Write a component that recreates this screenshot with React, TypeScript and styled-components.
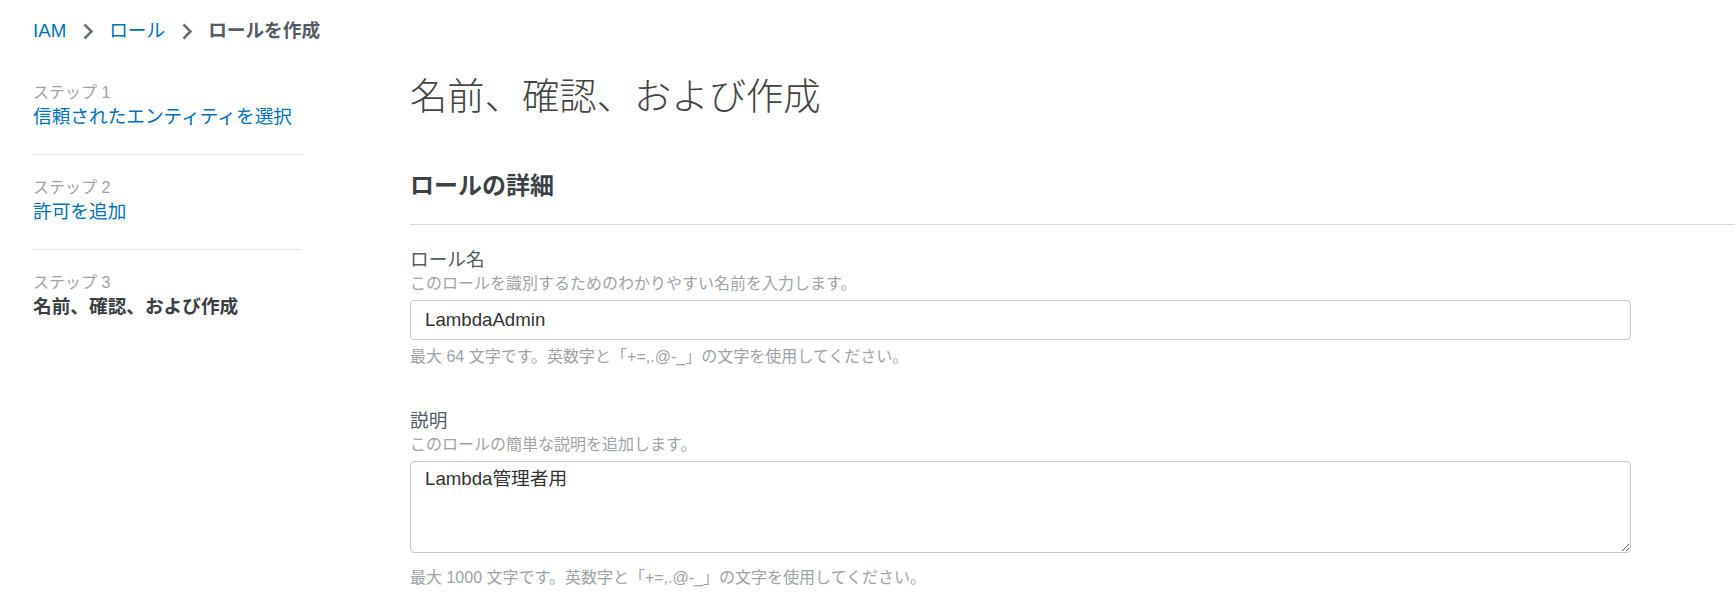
import React from 'react';
import styled, { createGlobalStyle } from 'styled-components';

const GlobalStyle = createGlobalStyle`
  html, body {
    margin: 0;
    padding: 0;
    background: #fff;
  }
  body {
    font-family: "Liberation Sans", "Noto Sans CJK JP", Arial, sans-serif;
    color: #16191f;
    overflow: hidden;
  }
`;

const Page = styled.div`
  padding: 17px 0 0 33px;
  width: 1702px;
`;

const Breadcrumbs = styled.nav`
  display: flex;
  align-items: center;
  height: 28px;
  font-size: 18.67px;
  line-height: 28px;
`;

const Crumb = styled.a<{ $current?: boolean }>`
  color: ${(p) => (p.$current ? '#545b64' : '#0073bb')};
  font-weight: ${(p) => (p.$current ? 700 : 400)};
  text-decoration: none;
`;

const Chevron = styled.svg`
  width: 12px;
  height: 17px;
  margin: 0 15px 0 16px;
  flex-shrink: 0;
`;

const Layout = styled.div`
  display: flex;
  align-items: flex-start;
  gap: 108px;
  margin-top: 28px;
`;

const SideNav = styled.ol`
  list-style: none;
  margin: 0;
  padding: 8px 0 0;
  width: 269px;
  flex-shrink: 0;
`;

const Step = styled.li`
  padding: 21px 0 25px;
  border-bottom: 1px solid #e4e6e6;

  &:first-child {
    padding-top: 0;
  }
  &:last-child {
    border-bottom: none;
  }
`;

const StepLabel = styled.div`
  font-size: 16px;
  line-height: 24px;
  color: #9ea3a6;
`;

const StepTitle = styled.div<{ $active?: boolean }>`
  font-size: 18.67px;
  line-height: 24px;
  color: ${(p) => (p.$active ? '#3b3f44' : '#0073bb')};
  font-weight: ${(p) => (p.$active ? 700 : 400)};
`;

const Main = styled.main`
  flex: 1;
  min-width: 0;
`;

const Title = styled.h1`
  margin: 0;
  font-size: 37.33px;
  line-height: 48px;
  font-weight: 300;
  color: #444;
`;

const Section = styled.section`
  margin-top: 49px;
`;

const SectionHeader = styled.h2`
  margin: 0;
  padding-bottom: 22px;
  border-bottom: 1px solid #d5d7d8;
  font-size: 24px;
  line-height: 32px;
  font-weight: 700;
  color: #3d4145;
`;

const Fields = styled.div`
  max-width: 1221px;
  padding-top: 23px;
  display: flex;
  flex-direction: column;
  gap: 40px;
`;

const Field = styled.div`
  display: flex;
  flex-direction: column;
`;

const Label = styled.label`
  font-size: 18.67px;
  line-height: 24px;
  color: #545b64;
`;

const Description = styled.div`
  font-size: 16px;
  line-height: 24px;
  color: #9ea3a6;
`;

const Hint = styled.div<{ $gap: number }>`
  margin-top: ${(p) => p.$gap}px;
  font-size: 16px;
  line-height: 24px;
  color: #9ea3a6;
`;

const TextInput = styled.input`
  box-sizing: border-box;
  margin-top: 4px;
  width: 100%;
  height: 40px;
  padding: 0 14px;
  border: 1px solid #c6c8c9;
  border-radius: 4px;
  font-family: inherit;
  font-size: 18.67px;
  color: #333;
  background: #fff;
  outline: none;
`;

const TextArea = styled.textarea`
  display: block;
  box-sizing: border-box;
  margin-top: 4px;
  width: 100%;
  height: 92px;
  padding: 5px 14px;
  border: 1px solid #c6c8c9;
  border-radius: 4px;
  font-family: inherit;
  font-size: 18.67px;
  line-height: 24px;
  color: #333;
  background: #fff;
  outline: none;
`;

const ChevronIcon = () => (
  <Chevron viewBox="0 0 12 17" fill="none">
    <polyline points="2.5,1.5 9.5,8.5 2.5,15.5" stroke="#687078" strokeWidth="2.6" />
  </Chevron>
);

const steps = [
  { label: 'ステップ 1', title: '信頼されたエンティティを選択' },
  { label: 'ステップ 2', title: '許可を追加' },
  { label: 'ステップ 3', title: '名前、確認、および作成', active: true },
];

const App = () => {
  return (
    <Page>
      <GlobalStyle />
      <Breadcrumbs>
        <Crumb href="#">IAM</Crumb>
        <ChevronIcon />
        <Crumb href="#">ロール</Crumb>
        <ChevronIcon />
        <Crumb $current>ロールを作成</Crumb>
      </Breadcrumbs>

      <Layout>
        <SideNav>
          {steps.map((s) => (
            <Step key={s.label}>
              <StepLabel>{s.label}</StepLabel>
              <StepTitle $active={s.active}>{s.title}</StepTitle>
            </Step>
          ))}
        </SideNav>

        <Main>
          <Title>名前、確認、および作成</Title>
          <Section>
            <SectionHeader>ロールの詳細</SectionHeader>
            <Fields>
              <Field>
                <Label>ロール名</Label>
                <Description>このロールを識別するためのわかりやすい名前を入力します。</Description>
                <TextInput defaultValue="LambdaAdmin" />
                <Hint $gap={5}>最大 64 文字です。英数字と「+=,.@-_」の文字を使用してください。</Hint>
              </Field>
              <Field>
                <Label>説明</Label>
                <Description>このロールの簡単な説明を追加します。</Description>
                <TextArea defaultValue="Lambda管理者用" />
                <Hint $gap={13}>最大 1000 文字です。英数字と「+=,.@-_」の文字を使用してください。</Hint>
              </Field>
            </Fields>
          </Section>
        </Main>
      </Layout>
    </Page>
  );
};

export default App;
